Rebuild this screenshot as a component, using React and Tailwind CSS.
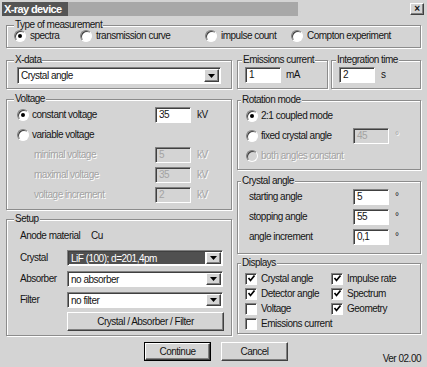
import React from "react";

const sunken =
  "border border-t-[#808080] border-l-[#808080] border-b-white border-r-white shadow-[inset_1px_1px_0_#404040]";
const raised =
  "border border-t-white border-l-white border-b-[#404040] border-r-[#404040] shadow-[inset_-1px_-1px_0_#808080] bg-[#d4d4d4]";
const dim = "text-[#a3a3a3] [text-shadow:1px_1px_0_#fff]";

const Group = ({ label, labelClass = "ml-[7px]", className = "", children }) => (
  <div
    className={`border border-[#8c8c8c] shadow-[inset_1px_1px_0_#fff,1px_1px_0_#fff] ${className}`}
  >
    <div className={`-mt-[7px] w-fit bg-[#d4d4d4] px-[1px] leading-[12px] ${labelClass}`}>
      {label}
    </div>
    {children}
  </div>
);

const Radio = ({ checked, disabled }) => (
  <span
    className={`flex h-[12px] w-[12px] shrink-0 items-center justify-center rounded-full ${sunken} ${
      disabled ? "bg-[#d4d4d4]" : "bg-white"
    }`}
  >
    {checked && <span className="h-[4px] w-[4px] rounded-full bg-black" />}
  </span>
);

const Check = ({ checked }) => (
  <span className={`flex h-[12px] w-[12px] shrink-0 items-center justify-center bg-white ${sunken}`}>
    {checked && (
      <svg width="9" height="9" viewBox="0 0 9 9">
        <path d="M1.5 4 L3.5 6.5 L7.5 1.5" fill="none" stroke="#000" strokeWidth="1.7" />
      </svg>
    )}
  </span>
);

const Field = ({ value, disabled, w = "w-[36px]" }) => (
  <div
    className={`h-[16px] ${w} shrink-0 pl-[3px] leading-[14px] ${sunken} ${
      disabled ? "bg-[#d4d4d4] text-[#a3a3a3]" : "bg-white"
    }`}
  >
    {value}
  </div>
);

const Arrow = () => (
  <div className={`flex h-full w-[15px] shrink-0 items-center justify-center ${raised}`}>
    <svg width="7" height="4" viewBox="0 0 7 4">
      <path d="M0 0 H7 L3.5 4 Z" fill="#000" />
    </svg>
  </div>
);

const Select = ({ value, className = "", active }) => (
  <div className={`flex bg-white p-[1px] ${sunken} ${className}`}>
    <div
      className={`flex-1 pl-[2px] leading-[13px] ${
        active ? "mr-[1px] bg-[#505050] text-white" : ""
      }`}
    >
      {value}
    </div>
    <Arrow />
  </div>
);

const Btn = ({ children, className = "" }) => (
  <div className={`flex items-center justify-center ${raised} ${className}`}>{children}</div>
);

export default function App() {
  const displays = [
    ["Crystal angle", true, "Impulse rate", true],
    ["Detector angle", true, "Spectrum", true],
    ["Voltage", false, "Geometry", true],
  ];

  return (
    <div className="h-[367px] w-[427px] overflow-hidden bg-[#d4d4d4] font-['Liberation_Sans',Arial,sans-serif] text-[10px] leading-[12px] tracking-[-0.5px] text-[#141414]">
      {/* Title bar */}
      <div className="flex h-[17px] items-start pl-[2px] pr-[3px] pt-[2px]">
        <div className="h-[14px] w-[66px] whitespace-nowrap bg-[#555555] pl-[2px] text-[11px] font-bold leading-[14px] tracking-[-0.6px] text-white">
          X-ray device
        </div>
        <div className="h-[14px] w-[230px] bg-[#a8a8a8]" />
        <Btn className="ml-auto mt-[1px] h-[12px] w-[14px] text-[10px] font-bold leading-none">
          ×
        </Btn>
      </div>

      <div className="px-[6px] pt-[8px]">
        {/* Type of measurement */}
        <Group label="Type of measurement" className="h-[23px]">
          <div className="-mt-[1px] flex h-[12px] items-center pl-[7px]">
            {[
              ["spectra", "w-[66px]", true],
              ["transmission curve", "w-[125px]"],
              ["impulse count", "w-[86px]"],
              ["Compton experiment", ""],
            ].map(([t, w, c]) => (
              <div key={t} className={`flex items-center gap-[4px] ${w}`}>
                <Radio checked={c} />
                <span>{t}</span>
              </div>
            ))}
          </div>
        </Group>

        <div className="mt-[12px] flex items-start gap-[5px]">
          {/* Left column */}
          <div className="flex w-[227px] flex-col">
            <Group label="X-data" className="h-[29px]">
              <Select value="Crystal angle" className="ml-[10px] mt-[1px] h-[17px] w-[204px]" />
            </Group>

            <Group label="Voltage" className="mt-[10px] h-[111px]">
              <div className="flex h-[20px] items-center pl-[10px]">
                <div className="flex w-[138px] items-center gap-[3px]">
                  <Radio checked />
                  <span>constant voltage</span>
                </div>
                <Field value="35" />
                <span className="ml-[6px]">kV</span>
              </div>
              <div className="flex h-[20px] items-center gap-[3px] pl-[10px]">
                <Radio />
                <span>variable voltage</span>
              </div>
              {[
                ["minimal voltage", "5"],
                ["maximal voltage", "35"],
                ["voltage increment", "2"],
              ].map(([t, v]) => (
                <div key={t} className="flex h-[20px] items-center pl-[27px]">
                  <span className={`w-[121px] ${dim}`}>{t}</span>
                  <Field value={v} disabled />
                  <span className={`ml-[6px] ${dim}`}>kV</span>
                </div>
              ))}
            </Group>

            <Group label="Setup" className="mt-[9px] h-[117px]">
              <div className="mt-[3px] flex h-[16px] items-center pl-[13px]">
                <span className="w-[71px]">Anode material</span>
                <span>Cu</span>
              </div>
              <div className="mt-[6px] flex flex-col gap-[5px] pl-[13px]">
                {[
                  ["Crystal", "LiF (100); d=201,4pm", true],
                  ["Absorber", "no absorber"],
                  ["Filter", "no filter"],
                ].map(([l, v, a]) => (
                  <div key={l} className="flex items-center">
                    <span className="w-[47px]">{l}</span>
                    <Select value={v} active={a} className="h-[16px] w-[156px]" />
                  </div>
                ))}
              </div>
              <Btn className="ml-[60px] mt-[4px] h-[19px] w-[157px]">Crystal / Absorber / Filter</Btn>
            </Group>
          </div>

          {/* Right column */}
          <div className="flex w-[184px] flex-col">
            <div className="flex h-[29px] gap-[3px]">
              <Group label="Emissions current" labelClass="ml-[4px]" className="h-[29px] w-[91px]">
                <div className="mt-[1px] flex items-center pl-[7px]">
                  <Field value="1" />
                  <span className="ml-[5px]">mA</span>
                </div>
              </Group>
              <Group label="Integration time" labelClass="ml-[4px]" className="h-[29px] w-[90px]">
                <div className="mt-[1px] flex items-center pl-[7px]">
                  <Field value="2" />
                  <span className="ml-[6px]">s</span>
                </div>
              </Group>
            </div>

            <Group label="Rotation mode" labelClass="ml-[3px]" className="mt-[11px] h-[70px]">
              <div className="flex h-[20px] items-center gap-[3px] pl-[8px]">
                <Radio checked />
                <span>2:1 coupled mode</span>
              </div>
              <div className="flex h-[20px] items-center pl-[8px]">
                <div className="flex w-[107px] items-center gap-[3px]">
                  <Radio />
                  <span>fixed crystal angle</span>
                </div>
                <Field value="45" disabled />
                <span className={`ml-[6px] ${dim}`}>°</span>
              </div>
              <div className="flex h-[20px] items-center gap-[3px] pl-[8px]">
                <Radio disabled />
                <span className={dim}>both angles constant</span>
              </div>
            </Group>

            <Group label="Crystal angle" labelClass="ml-[3px]" className="mt-[11px] h-[73px]">
              {[
                ["starting angle", "5"],
                ["stopping angle", "55"],
                ["angle increment", "0,1"],
              ].map(([t, v]) => (
                <div key={t} className="flex h-[20px] items-center pl-[11px]">
                  <span className="w-[104px]">{t}</span>
                  <Field value={v} />
                  <span className="ml-[6px]">°</span>
                </div>
              ))}
            </Group>

            <Group label="Displays" labelClass="ml-[3px]" className="mt-[9px] h-[71px]">
              <div className="mt-[2px] flex flex-col pl-[7px]">
                {displays.map(([a, ca, b, cb]) => (
                  <div key={a} className="flex h-[15px] items-center">
                    <div className="flex w-[86px] items-center gap-[4px]">
                      <Check checked={ca} />
                      <span>{a}</span>
                    </div>
                    <div className="flex items-center gap-[4px]">
                      <Check checked={cb} />
                      <span>{b}</span>
                    </div>
                  </div>
                ))}
                <div className="flex h-[15px] items-center gap-[4px]">
                  <Check />
                  <span>Emissions current</span>
                </div>
              </div>
            </Group>
          </div>
        </div>

        {/* Buttons */}
        <div className="mt-[6px] flex h-[19px] items-start">
          <div className="ml-[138px] h-[19px] w-[67px] border border-black">
            <Btn className="h-full w-full">Continue</Btn>
          </div>
          <Btn className="ml-[10px] h-[19px] w-[67px]">Cancel</Btn>
          <span className="-mb-[4px] ml-auto self-end">Ver 02.00</span>
        </div>
      </div>
    </div>
  );
}
